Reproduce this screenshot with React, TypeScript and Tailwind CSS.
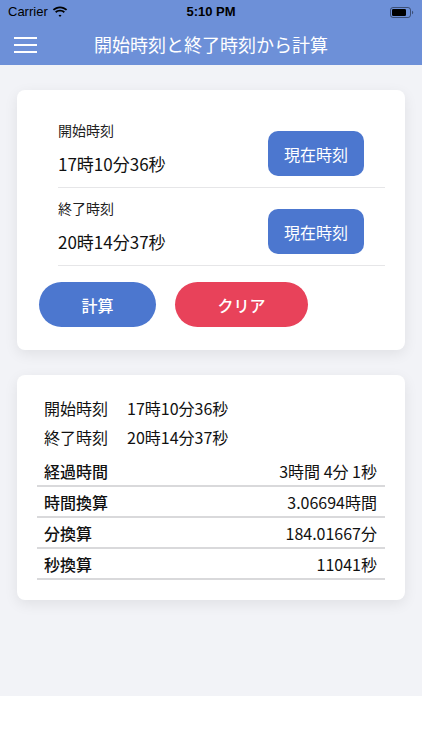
import React from 'react';

const font = { fontFamily: '"Noto Sans CJK JP", "Noto Sans", sans-serif' };

// ステータスバーのアイコン
const WifiIcon = () => (
  <svg width="16" height="12" viewBox="0 0 16 12" fill="#000">
    <path d="M8 2.2c2.3 0 4.4.9 6 2.4l1.2-1.3C13.3 1.4 10.8.4 8 .4S2.7 1.4.8 3.3L2 4.6c1.6-1.5 3.7-2.4 6-2.4z" />
    <path d="M8 5.5c1.4 0 2.7.5 3.7 1.4L12.9 5.6C11.6 4.4 9.9 3.7 8 3.7S4.4 4.4 3.1 5.6l1.2 1.3c1-.9 2.3-1.4 3.7-1.4z" />
    <path d="M8 8.7c.6 0 1.1.2 1.5.6L8 11 6.5 9.3c.4-.4.9-.6 1.5-.6z" />
  </svg>
);

const BatteryIcon = () => (
  <svg width="24" height="11" viewBox="0 0 24 11">
    <rect x="0.5" y="0.5" width="20" height="10" rx="2.5" fill="none" stroke="#000" strokeOpacity="0.45" />
    <rect x="2" y="2" width="14" height="7" rx="1.2" fill="#000" />
    <path d="M22 3.7v3.6c.7-.3 1.2-1 1.2-1.8s-.5-1.5-1.2-1.8z" fill="#000" fillOpacity="0.45" />
  </svg>
);

const TimeRow = ({ label, value }: { label: string; value: string }) => (
  <div className="flex items-end justify-between pt-[10px] pb-[11px] pr-[21px] border-b border-[#e6e6e8]">
    <div className="flex flex-col">
      <span className="text-[14px] leading-[20px] text-[#222]">{label}</span>
      <span className="mt-[12px] text-[17px] leading-[24px] text-[#111]">{value}</span>
    </div>
    <button className="w-[96px] h-[45px] rounded-[10px] bg-[#4c77cf] text-white text-[16px]">
      現在時刻
    </button>
  </div>
);

const ResultRow = ({ label, value }: { label: string; value: string }) => (
  <div className="flex items-center justify-between h-[31px] pl-[7px] pr-[8px] border-b-2 border-[#d9d9db]">
    <span className="text-[16px] font-medium text-[#111]">{label}</span>
    <span className="text-[16px] text-[#111]">{value}</span>
  </div>
);

export default function App() {
  return (
    <div className="w-[422px] h-[750px] bg-white flex flex-col" style={font}>
      {/* ヘッダー */}
      <div className="bg-[#6d90d8]">
        <div className="h-[24px] flex items-center justify-between pl-[8px] pr-[8px] relative">
          <div className="flex items-center gap-[4px] text-[13px] text-black">
            <span style={{ fontFamily: '"Liberation Sans", sans-serif' }}>Carrier</span>
            <WifiIcon />
          </div>
          <span
            className="absolute left-1/2 -translate-x-1/2 text-[13px] font-bold text-black"
            style={{ fontFamily: '"Liberation Sans", sans-serif' }}
          >
            5:10 PM
          </span>
          <BatteryIcon />
        </div>
        <div className="h-[41px] flex items-center relative">
          <div className="ml-[14px] flex flex-col gap-[5px]">
            <div className="w-[23px] h-[2px] bg-white" />
            <div className="w-[23px] h-[2px] bg-white" />
            <div className="w-[23px] h-[2px] bg-white" />
          </div>
          <span className="absolute left-0 right-0 text-center text-white text-[18px] pointer-events-none">
            開始時刻と終了時刻から計算
          </span>
        </div>
      </div>

      {/* 本体 */}
      <div className="bg-[#f2f3f7] h-[631px] pt-[25px] px-[17px] flex flex-col gap-[25px]">
        {/* 入力カード */}
        <div className="bg-white rounded-[8px] shadow-[0_4px_14px_rgba(0,0,0,0.08)] pt-[20px] pb-[23px]">
          <div className="ml-[41px] mr-[20px]">
            <TimeRow label="開始時刻" value="17時10分36秒" />
            <TimeRow label="終了時刻" value="20時14分37秒" />
          </div>
          <div className="flex gap-[19px] ml-[22px] mt-[16px]">
            <button className="w-[117px] h-[45px] rounded-full bg-[#4c77cf] text-white text-[16px] font-medium">
              計算
            </button>
            <button className="w-[133px] h-[45px] rounded-full bg-[#e8425a] text-white text-[16px] font-medium">
              クリア
            </button>
          </div>
        </div>

        {/* 結果カード */}
        <div className="bg-white rounded-[8px] shadow-[0_4px_14px_rgba(0,0,0,0.08)] pt-[18px] pb-[20px] px-[20px]">
          <div className="pl-[7px] text-[16px] text-[#111]">
            <div className="flex h-[29px] items-center">
              <span>開始時刻</span>
              <span className="ml-[19px]">17時10分36秒</span>
            </div>
            <div className="flex h-[29px] items-center">
              <span>終了時刻</span>
              <span className="ml-[19px]">20時14分37秒</span>
            </div>
          </div>
          <div className="mt-[5px]">
            <ResultRow label="経過時間" value="3時間 4分 1秒" />
            <ResultRow label="時間換算" value="3.06694時間" />
            <ResultRow label="分換算" value="184.01667分" />
            <ResultRow label="秒換算" value="11041秒" />
          </div>
        </div>
      </div>
    </div>
  );
}
